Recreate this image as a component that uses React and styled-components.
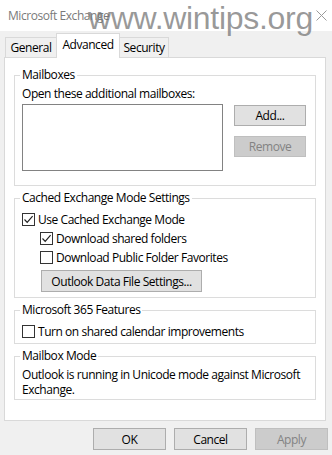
import React from 'react'
import styled, { createGlobalStyle } from 'styled-components'

const GlobalStyle = createGlobalStyle`
    html, body {
        margin: 0;
        padding: 0;
        background: #f0f0f0;
    }
    * {
        box-sizing: border-box;
    }
`

const Window = styled.div`
    position: relative;
    width: 332px;
    height: 455px;
    display: flex;
    flex-direction: column;
    background: #f0f0f0;
    font-family: "Open Sans", "Noto Sans", sans-serif;
    font-size: 12px;
    letter-spacing: -0.45px;
    color: #000;
    overflow: hidden;
`

const TitleBar = styled.div`
    height: 31px;
    flex: none;
    background: #fff;
    display: flex;
    align-items: center;
    justify-content: space-between;
    padding: 0 5px 1px 8px;
    color: #7a7a7a;
`

const CloseIcon = styled.svg`
    width: 11px;
    height: 11px;
`

const Watermark = styled.div`
    position: absolute;
    left: 88px;
    top: 2px;
    font-family: "Liberation Sans", Arial, sans-serif;
    font-size: 32px;
    line-height: 32px;
    letter-spacing: -0.3px;
    color: rgba(120, 120, 120, 0.75);
    pointer-events: none;
    white-space: nowrap;
`

const TabRow = styled.div`
    height: 26px;
    flex: none;
    display: flex;
    align-items: flex-end;
    padding-left: 5px;
`

const Tab = styled.div`
    width: ${p => p.$w};
    height: ${p => (p.$active ? '25px' : '20px')};
    padding-bottom: ${p => (p.$active ? '3px' : '0')};
    display: flex;
    align-items: center;
    justify-content: center;
    background: ${p => (p.$active ? '#fff' : '#f0f0f0')};
    border: 1px solid #d9d9d9;
    border-bottom: none;
    margin-left: ${p => (p.$first ? '0' : '-1px')};
    margin-bottom: ${p => (p.$active ? '-1px' : '0')};
    position: relative;
    z-index: ${p => (p.$active ? 1 : 0)};
`

const Panel = styled.div`
    flex: none;
    height: 364px;
    margin: 0 6px 0 4px;
    background: #fff;
    border: 1px solid #d9d9d9;
    padding: 9px 9px 0;
    display: flex;
    flex-direction: column;
    gap: 4px;
`

const Group = styled.fieldset`
    margin: 0;
    border: 1px solid #dcdcdc;
    padding: ${p => p.$pad || '0 7px 2px'};
    min-width: 0;
`

const Legend = styled.legend`
    padding: 0 2px;
    margin-left: -2px;
    line-height: 16px;
`

const Line = styled.div`
    line-height: ${p => p.$lh || '16px'};
    margin-top: ${p => p.$mt || 0};
`

const MailboxRow = styled.div`
    display: flex;
    gap: 11px;
    margin-top: 2px;
`

const ListBox = styled.div`
    width: 201px;
    height: 67px;
    border: 1px solid #828282;
    background: #fff;
`

const ButtonStack = styled.div`
    display: flex;
    flex-direction: column;
    gap: 10px;
    padding-top: 1px;
`

const Button = styled.button`
    width: ${p => p.$w || '72px'};
    height: ${p => p.$h || '21px'};
    padding: 0;
    margin: 0;
    font-family: inherit;
    font-size: 12px;
    letter-spacing: inherit;
    color: ${p => (p.disabled ? '#838383' : '#000')};
    background: ${p => (p.disabled ? '#cccccc' : '#e1e1e1')};
    border: 1px solid ${p => (p.disabled ? '#bfbfbf' : '#adadad')};
    border-radius: 0;
`

const Indent = styled.div`
    padding-left: 19px;
    margin-top: 3px;
`

const CheckRow = styled.label`
    display: flex;
    align-items: center;
    height: ${p => p.$h || '19px'};
    padding-left: ${p => (p.$indent ? '18px' : '0')};
    gap: 3px;
`

const Box = styled.span`
    width: 13px;
    height: 13px;
    flex: none;
    border: 1px solid #333;
    background: #fff;
    display: flex;
    align-items: center;
    justify-content: center;
`

const Footer = styled.div`
    flex: none;
    display: flex;
    justify-content: flex-end;
    gap: 8px;
    padding: 7px 4px 0 0;
`

function Check({ checked }) {
    return (
        <Box>
            {checked && (
                <svg width="11" height="11" viewBox="0 0 11 11">
                    <path d="M1.5 5.5 L4.2 8.3 L9.6 2.2" fill="none" stroke="#222" strokeWidth="1.2" />
                </svg>
            )}
        </Box>
    )
}

export default function App() {
    return (
        <>
            <GlobalStyle />
            <Window>
                <TitleBar>
                    <span>Microsoft Exchange</span>
                    <CloseIcon viewBox="0 0 11 11">
                        <path d="M0.5 0.5 L10.5 10.5 M10.5 0.5 L0.5 10.5" stroke="#9a9a9a" strokeWidth="1" />
                    </CloseIcon>
                </TitleBar>
                <Watermark>www.wintips.org</Watermark>
                <TabRow>
                    <Tab $first $w="52px">General</Tab>
                    <Tab $active $w="64px">Advanced</Tab>
                    <Tab $w="50px">Security</Tab>
                </TabRow>
                <Panel>
                    <Group $pad="0 7px 14px">
                        <Legend>Mailboxes</Legend>
                        <Line $mt="3px">Open these additional mailboxes:</Line>
                        <MailboxRow>
                            <ListBox />
                            <ButtonStack>
                                <Button>Add...</Button>
                                <Button disabled>Remove</Button>
                            </ButtonStack>
                        </MailboxRow>
                    </Group>
                    <Group $pad="4px 7px 5px">
                        <Legend>Cached Exchange Mode Settings</Legend>
                        <CheckRow>
                            <Check checked />
                            Use Cached Exchange Mode
                        </CheckRow>
                        <CheckRow $indent>
                            <Check checked />
                            Download shared folders
                        </CheckRow>
                        <CheckRow $indent>
                            <Check />
                            Download Public Folder Favorites
                        </CheckRow>
                        <Indent>
                            <Button $w="161px" $h="22px">Outlook Data File Settings...</Button>
                        </Indent>
                    </Group>
                    <Group $pad="4px 7px 2px">
                        <Legend>Microsoft 365 Features</Legend>
                        <CheckRow>
                            <Check />
                            Turn on shared calendar improvements
                        </CheckRow>
                    </Group>
                    <Group $pad="3px 7px 2px">
                        <Legend>Mailbox Mode</Legend>
                        <Line $lh="15px">Outlook is running in Unicode mode against Microsoft Exchange.</Line>
                    </Group>
                </Panel>
                <Footer>
                    <Button $w="73px" $h="22px">OK</Button>
                    <Button $w="73px" $h="22px">Cancel</Button>
                    <Button $w="73px" $h="22px" disabled>Apply</Button>
                </Footer>
            </Window>
        </>
    )
}
